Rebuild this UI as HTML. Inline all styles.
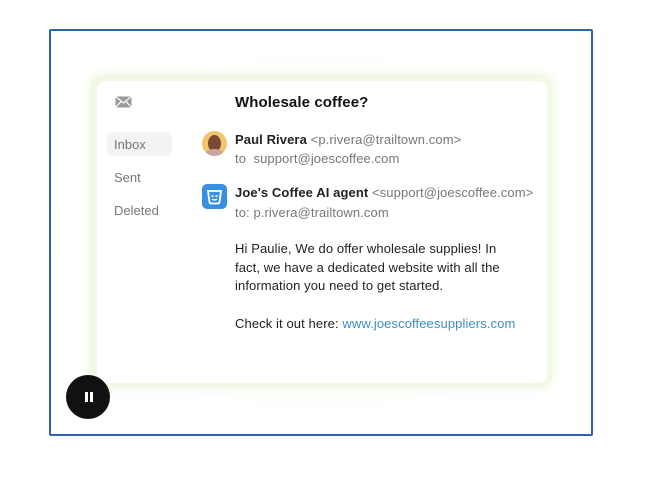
<!DOCTYPE html>
<html><head><style>
body{margin:0;width:650px;height:501px;background:#fff;position:relative;overflow:hidden;font-family:"Liberation Sans",sans-serif}
.frame{position:absolute;left:49px;top:29px;width:540px;height:403px;border:2px solid #2a64ad;border-radius:2px;background:radial-gradient(ellipse at 50% 50%,#f7fcef 0%,#fff 70%)}
.halo{position:absolute;left:91px;top:75px;width:461px;height:312px;border-radius:12px;background:#f0f8e6;box-shadow:0 0 8px 3px #f3faea}
.card{position:absolute;left:97px;top:81px;width:450px;height:302px;border-radius:8px;background:#fff}
.t{position:absolute;white-space:nowrap;font-size:13px;color:#222;letter-spacing:0.1px}
.g{color:#777}
.s{position:absolute;font-size:13px;color:#777}
</style></head><body>
<div class="frame"></div>
<div class="halo"></div>
<div class="card"></div>
<svg style="position:absolute;left:115px;top:96px" width="17" height="12"><rect x="0.5" y="0.5" width="16" height="11" fill="#9a9a9a"/><path d="M0.5 0.5L8.5 7L16.5 0.5M0.5 11.5L6 5.5M16.5 11.5L11 5.5" stroke="#fff" stroke-width="1.2" fill="none"/></svg>
<div style="position:absolute;left:107px;top:132px;width:65px;height:24px;border-radius:6px;background:#f3f3f3"></div>
<div class="s" style="left:114px;top:137px">Inbox</div>
<div class="s" style="left:114px;top:170px">Sent</div>
<div class="s" style="left:114px;top:203px">Deleted</div>
<div class="t" style="left:235px;top:94px;font-size:15px;font-weight:bold;color:#111">Wholesale coffee?</div>
<div style="position:absolute;left:202px;top:131px;width:25px;height:25px;border-radius:50%;background:#f3c56a;overflow:hidden"><div style="position:absolute;left:6px;top:4px;width:13px;height:17px;border-radius:50%;background:#7a4a35"></div><div style="position:absolute;left:3px;top:18px;width:19px;height:10px;border-radius:50%;background:#c9a6a0"></div></div>
<div class="t" style="left:235px;top:132px"><b>Paul Rivera</b> <span class="g">&lt;p.rivera@trailtown.com&gt;</span></div>
<div class="t g" style="left:235px;top:151px">to &nbsp;support@joescoffee.com</div>
<svg style="position:absolute;left:202px;top:184px" width="25" height="25"><rect width="25" height="25" rx="5" fill="#3a8fe0"/><path d="M6 7h13l-1.5 11a2 2 0 0 1-2 1.5h-6a2 2 0 0 1-2-1.5z" fill="none" stroke="#fff" stroke-width="1.8"/><path d="M9.5 12.5q1 -1 2 0M13.5 12.5q1 -1 2 0M10 15q2.5 2 5 0" stroke="#fff" stroke-width="1.4" fill="none"/></svg>
<div class="t" style="left:235px;top:185px"><b>Joe's Coffee AI agent</b> <span class="g">&lt;support@joescoffee.com&gt;</span></div>
<div class="t g" style="left:235px;top:205px">to: p.rivera@trailtown.com</div>
<div class="t" style="left:235px;top:241px">Hi Paulie, We do offer wholesale supplies! In</div>
<div class="t" style="left:235px;top:260px">fact, we have a dedicated website with all the</div>
<div class="t" style="left:235px;top:278px">information you need to get started.</div>
<div class="t" style="left:235px;top:316px">Check it out here: <span style="color:#3d8ec9">www.joescoffeesuppliers.com</span></div>
<div style="position:absolute;left:66px;top:375px;width:44px;height:44px;border-radius:50%;background:#111"></div>
<div style="position:absolute;left:85px;top:392px;width:2.5px;height:10px;background:#fff"></div>
<div style="position:absolute;left:90px;top:392px;width:2.5px;height:10px;background:#fff"></div>
</body></html>
